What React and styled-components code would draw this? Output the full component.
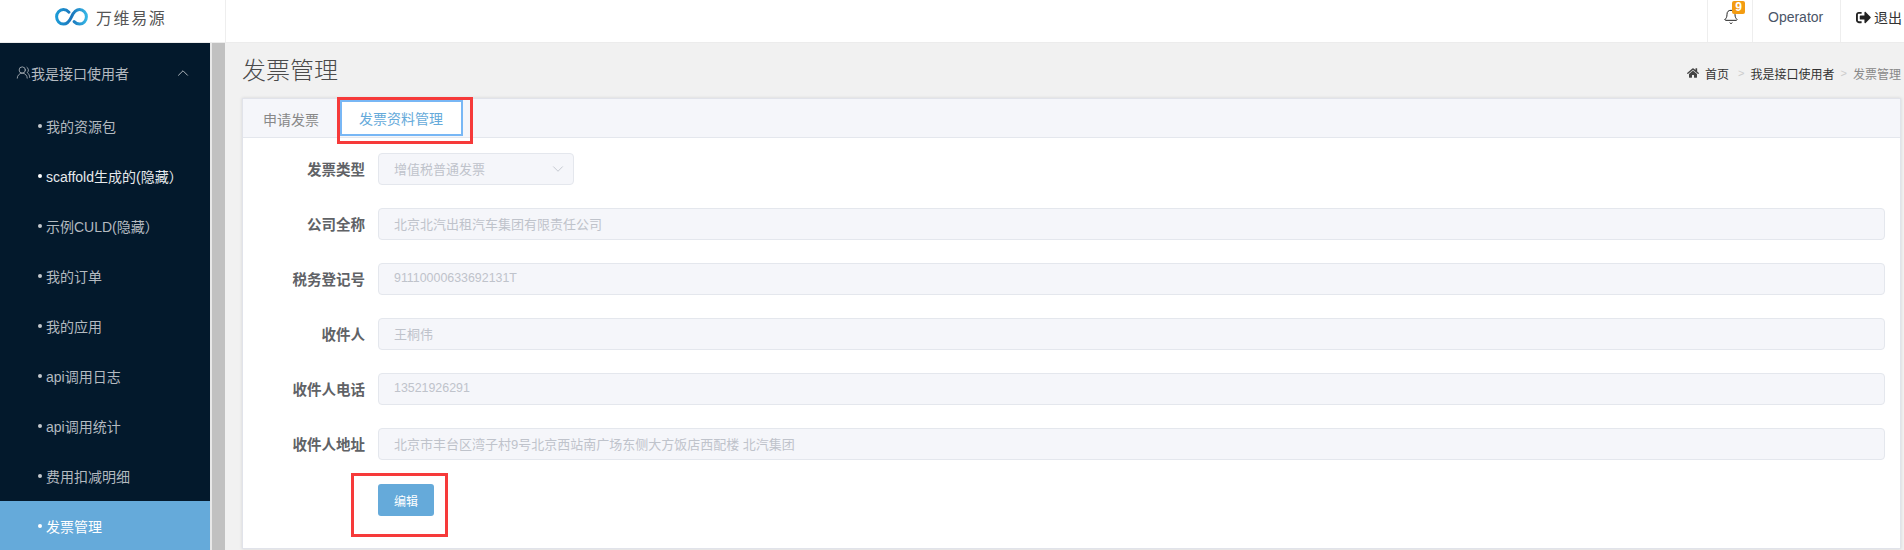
import styled, { createGlobalStyle } from "styled-components";
import { Bell, ChevronDown, ChevronUp, UsersRound } from "lucide-react";
import { FaHome, FaSignOutAlt } from "react-icons/fa";

const FONT = `"Liberation Sans", "Noto Sans CJK SC", sans-serif`;

const GlobalStyle = createGlobalStyle`
  html, body {
    margin: 0;
    height: 550px;
    overflow: hidden;
    background: #f1f1f1;
    font-family: ${FONT};
  }
`;

const Page = styled.div`
  width: 1904px;
  height: 550px;
  display: flex;
  flex-direction: column;
  overflow: hidden;
`;

const TopBar = styled.header`
  height: 42px;
  flex: none;
  display: flex;
  justify-content: space-between;
  background: #fff;
  border-bottom: 1px solid #ececec;
`;

const Brand = styled.div`
  width: 226px;
  display: flex;
  align-items: center;
  gap: 8px;
  padding: 0 0 8px 55px;
  box-sizing: border-box;
  border-right: 1px solid #eee;
`;

const BrandName = styled.span`
  font-size: 16px;
  letter-spacing: 1.6px;
  color: #555;
`;

const TopActions = styled.div`
  display: flex;
`;

const TopCell = styled.div`
  position: relative;
  width: ${(p) => p.$width}px;
  box-sizing: border-box;
  display: flex;
  align-items: center;
  gap: 3px;
  padding: 0 0 8px ${(p) => p.$pad}px;
  border-left: 1px solid #eee;
  font-size: 14px;
  color: ${(p) => p.$color || "#333"};
`;

const Badge = styled.span`
  position: absolute;
  left: 24px;
  top: 1px;
  width: 13px;
  height: 13px;
  border-radius: 2px;
  background: #f39c12;
  color: #fff;
  font-size: 12px;
  font-weight: 700;
  line-height: 13px;
  text-align: center;
`;

const Body = styled.div`
  flex: 1;
  display: flex;
  min-height: 0;
`;

const Sidebar = styled.nav`
  width: 210px;
  flex: none;
  background: #03192c;
  color: #b4bac0;
  font-size: 14px;
`;

const GroupHead = styled.div`
  height: 58px;
  box-sizing: border-box;
  padding: 1px 18px 0 16px;
  display: flex;
  align-items: center;
  color: #b4bac0;
`;

const GroupTitle = styled.span`
  flex: 1;
`;

const MenuItem = styled.div`
  height: 50px;
  display: flex;
  align-items: center;
  gap: 4px;
  padding-left: 38px;
  background: ${(p) => (p.$active ? "#65aada" : "transparent")};
  color: ${(p) => (p.$active ? "#fff" : p.$bright ? "#e6e9ec" : "#b4bac0")};

  &::before {
    content: "";
    width: 4px;
    height: 4px;
    border-radius: 50%;
    background: ${(p) => (p.$active || p.$bright ? "#fff" : "#c3c8cd")};
  }
`;

const ScrollGutter = styled.div`
  width: 13px;
  flex: none;
  background: #c1c1c1;
  border-left: 2px solid #e8e8e8;
`;

const Content = styled.main`
  flex: 1;
  min-width: 0;
  display: flex;
  flex-direction: column;
  padding: 0 3px 1px 17px;
`;

const ContentHead = styled.div`
  height: 55px;
  flex: none;
  display: flex;
  align-items: center;
  justify-content: space-between;
`;

const PageTitle = styled.h1`
  margin: 0 0 4px;
  font-size: 24px;
  font-weight: 300;
  color: #4a4a4a;
`;

const Breadcrumb = styled.div`
  display: flex;
  align-items: center;
  gap: 6px;
  padding-top: 5px;
  font-size: 12px;
  color: #333;
`;

const Crumb = styled.span`
  color: ${(p) => (p.$current ? "#888" : "#333")};
  margin-right: ${(p) => p.$after || 0}px;
`;

const CrumbSep = styled.span`
  color: #ccc;
  font-size: 11px;
`;

const Card = styled.section`
  flex: 1;
  background: #fff;
  border: 1px solid #e1e3ea;
  box-shadow: 0 0 3px rgba(0, 0, 0, 0.12);
`;

const TabBar = styled.div`
  height: 38px;
  display: flex;
  align-items: flex-end;
  gap: 1px;
  background: #f5f6fa;
  border-bottom: 1px solid #e4e7ed;
`;

const Tab = styled.div`
  position: relative;
  height: 36px;
  box-sizing: border-box;
  padding: ${(p) => (p.$active ? "0 18px 0 17px" : "0 20px")};
  display: flex;
  align-items: center;
  font-size: 14px;
  color: ${(p) => (p.$active ? "#65aada" : "#888")};
  background: ${(p) => (p.$active ? "#fff" : "transparent")};
  border: ${(p) => (p.$active ? "2px solid #78b7f5" : "none")};
  margin-bottom: ${(p) => (p.$active ? 1 : 0)}px;
`;

const Annotation = styled.span`
  position: absolute;
  left: ${(p) => p.$left}px;
  top: ${(p) => p.$top}px;
  width: ${(p) => p.$w}px;
  height: ${(p) => p.$h}px;
  box-sizing: border-box;
  border: 3px solid #f63a3a;
  pointer-events: none;
`;

const Form = styled.form`
  display: flex;
  flex-direction: column;
  gap: 23px;
  padding: 15px 15px 0 0;
`;

const Row = styled.div`
  display: grid;
  grid-template-columns: 122px 1fr;
  column-gap: 13px;
  align-items: center;
`;

const Label = styled.label`
  padding-bottom: 2px;
  text-align: right;
  font-size: 14.5px;
  font-weight: 700;
  color: #606266;
`;

const Input = styled.input`
  height: 32px;
  width: 100%;
  box-sizing: border-box;
  padding: 0 15px 2px;
  border: 1px solid #e4e7ed;
  border-radius: 4px;
  background: #f5f6fa;
  color: #bfc3cb;
  font-family: ${FONT};
  font-size: 13px;
  -webkit-text-fill-color: #bfc3cb;
  opacity: 1;
`;

const NumberInput = styled(Input)`
  font-size: 12.4px;
`;

const SelectBox = styled.div`
  position: relative;
  width: 196px;
`;

const SelectArrow = styled.span`
  position: absolute;
  right: 7px;
  top: 7px;
  display: flex;
  color: #c0c4cc;
`;

const ButtonRow = styled.div`
  padding: 1px 0 0 135px;
`;

const ButtonSlot = styled.div`
  position: relative;
  width: 56px;
`;

const Button = styled.button`
  width: 56px;
  height: 32px;
  padding: 0;
  display: block;
  border: none;
  border-radius: 3px;
  background: #65aada;
  color: #fff;
  font-family: ${FONT};
  font-size: 12px;
`;

const menu = [
  "我的资源包",
  "scaffold生成的(隐藏）",
  "示例CULD(隐藏）",
  "我的订单",
  "我的应用",
  "api调用日志",
  "api调用统计",
  "费用扣减明细",
  "发票管理",
];

const fields = [
  ["公司全称", "北京北汽出租汽车集团有限责任公司"],
  ["税务登记号", "91110000633692131T", true],
  ["收件人", "王桐伟"],
  ["收件人电话", "13521926291", true],
  ["收件人地址", "北京市丰台区湾子村9号北京西站南广场东侧大方饭店西配楼 北汽集团"],
];

function Logo() {
  return (
    <svg width="33" height="18" viewBox="0 0 33 18" fill="none">
      <defs>
        <linearGradient id="logoBlue" x1="0" y1="0" x2="1" y2="0">
          <stop offset="0" stopColor="#1c9ad6" />
          <stop offset="0.5" stopColor="#1b75bb" />
          <stop offset="1" stopColor="#35b5e5" />
        </linearGradient>
      </defs>
      <path
        d="M14 4.2C12.5 2.6 10.6 1.6 8.4 1.6 4.5 1.6 1.6 4.8 1.6 8.8s3 7.3 6.8 7.3c3.6 0 6-2.7 8.1-7.3 2.1-4.5 4.6-7.2 8.1-7.2 3.8 0 6.8 3.3 6.8 7.2s-3 7.3-6.8 7.3c-2.2 0-4-.9-5.5-2.5"
        stroke="url(#logoBlue)"
        strokeWidth="3"
        strokeLinecap="round"
      />
    </svg>
  );
}

function App() {
  return (
    <Page>
      <GlobalStyle />
      <TopBar>
        <Brand>
          <Logo />
          <BrandName>万维易源</BrandName>
        </Brand>
        <TopActions>
          <TopCell $width={45} $pad={15}>
            <Bell size={16} strokeWidth={1.5} color="#222" />
            <Badge>9</Badge>
          </TopCell>
          <TopCell $width={88} $pad={15} $color="#4a5568">
            Operator
          </TopCell>
          <TopCell $width={64} $pad={15}>
            <FaSignOutAlt size={15} color="#222" />
            退出
          </TopCell>
        </TopActions>
      </TopBar>
      <Body>
        <Sidebar>
          <GroupHead>
            <UsersRound size={15} strokeWidth={1.3} />
            <GroupTitle>我是接口使用者</GroupTitle>
            <ChevronUp size={18} strokeWidth={1.3} />
          </GroupHead>
          {menu.map((item, i) => (
            <MenuItem key={item} $bright={i === 1} $active={i === 8}>
              {item}
            </MenuItem>
          ))}
        </Sidebar>
        <ScrollGutter />
        <Content>
          <ContentHead>
            <PageTitle>发票管理</PageTitle>
            <Breadcrumb>
              <FaHome size={12} color="#444" />
              <Crumb $after={3}>首页</Crumb>
              <CrumbSep>&gt;</CrumbSep>
              <Crumb>我是接口使用者</Crumb>
              <CrumbSep>&gt;</CrumbSep>
              <Crumb $current>发票管理</Crumb>
            </Breadcrumb>
          </ContentHead>
          <Card>
            <TabBar>
              <Tab>申请发票</Tab>
              <Tab $active>
                发票资料管理
                <Annotation $left={-5} $top={-5} $w={136} $h={47} />
              </Tab>
            </TabBar>
            <Form>
              <Row>
                <Label>发票类型</Label>
                <SelectBox>
                  <Input disabled value="增值税普通发票" readOnly />
                  <SelectArrow>
                    <ChevronDown size={18} strokeWidth={1.2} />
                  </SelectArrow>
                </SelectBox>
              </Row>
              {fields.map(([label, value, numeric]) => {
                const Field = numeric ? NumberInput : Input;
                return (
                  <Row key={label}>
                    <Label>{label}</Label>
                    <Field disabled value={value} readOnly />
                  </Row>
                );
              })}
              <ButtonRow>
                <ButtonSlot>
                  <Button type="button">编辑</Button>
                  <Annotation $left={-27} $top={-11} $w={97} $h={64} />
                </ButtonSlot>
              </ButtonRow>
            </Form>
          </Card>
        </Content>
      </Body>
    </Page>
  );
}

export default App;
